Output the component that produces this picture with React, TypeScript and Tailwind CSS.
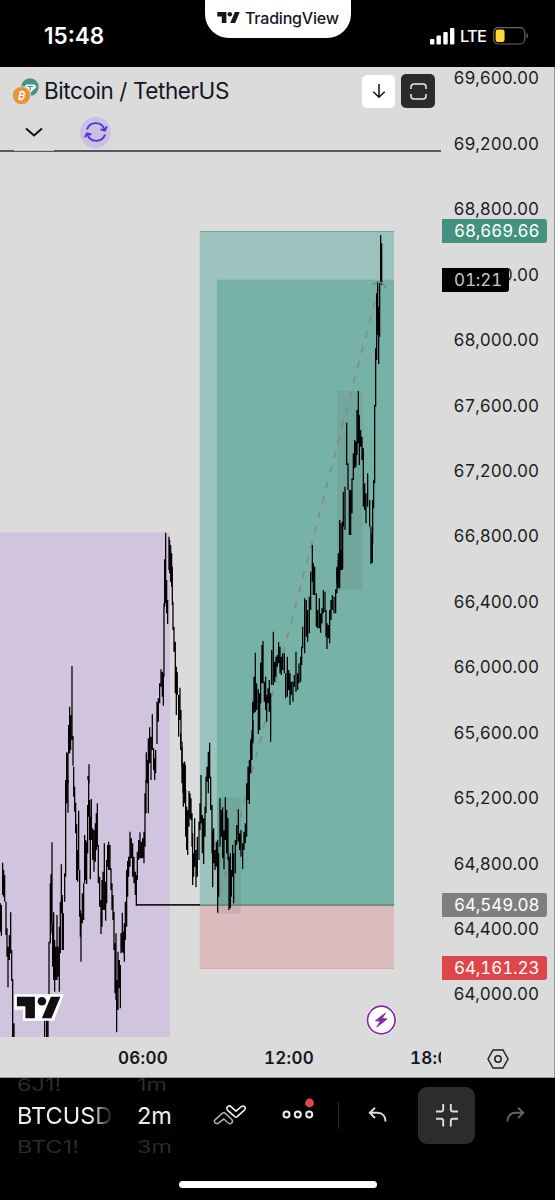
import type { ReactNode } from 'react';

type Bar = [x: number, high: number, low: number];

interface BarGroup {
  x: number;
  y: number;
  bars: Bar[];
}

const PRICES = [
  '69,600.00', '69,200.00', '68,800.00', '68,400.00', '68,000.00',
  '67,600.00', '67,200.00', '66,800.00', '66,400.00', '66,000.00',
  '65,600.00', '65,200.00', '64,800.00', '64,400.00', '64,000.00',
];

// bars are stored per block, in thirds of a pixel from the block's origin
const BAR_GROUPS: BarGroup[] = [
  {
    x: 0,
    y: 780,
    bars: [
      [1, 370, 455], [4, 375, 467], [8, 248, 345], [11, 270, 350], [14, 285, 365], [18, 365, 465],
      [21, 445, 530], [24, 500, 622], [28, 465, 540], [32, 397, 520], [35, 510, 602], [38, 597, 772],
      [42, 730, 772], [134, 720, 772], [140, 700, 772], [144, 690, 772], [147, 485, 700], [151, 310, 490],
      [153, 283, 430], [156, 187, 460], [158, 430, 560], [161, 397, 600], [164, 480, 635], [167, 500, 600],
      [171, 405, 600], [174, 500, 590], [178, 440, 635], [181, 365, 520], [184, 253, 400], [187, 345, 510],
      [190, 400, 510], [194, 280, 365], [197, 0, 290], [200, 0, 70], [204, 0, 98], [221, -40, 50],
      [224, 20, 95], [227, 68, 160], [230, 133, 300], [233, 210, 305], [236, 92, 270], [239, 270, 410],
      [241, 390, 470], [243, 400, 545], [247, 340, 430], [251, 310, 420], [254, 165, 310], [257, 180, 300],
      [260, 185, 312], [263, 75, 220], [266, 0, 110], [269, 60, 180], [271, 110, 298], [274, 57, 180],
      [278, 145, 240], [282, 150, 275], [286, 130, 245], [289, 100, 210], [292, 70, 200], [295, 195, 310],
      [299, 290, 380], [303, 360, 462], [306, 300, 440], [309, 275, 390], [313, 190, 390], [317, 305, 422],
      [320, 240, 370], [323, 195, 260], [326, 185, 270], [330, 195, 270], [333, 265, 330], [336, 310, 390],
      [339, 345, 420], [342, 395, 510], [345, 490, 640], [348, 460, 660], [350, 600, 757], [354, 515, 690],
      [358, 540, 625], [361, 555, 685], [363, 460, 520], [367, 398, 515], [370, 455, 520], [373, 430, 545],
      [376, 365, 480], [380, 270, 440], [383, 243, 350], [386, 230, 290], [390, 155, 260], [394, 175, 235],
      [398, 190, 290], [402, 230, 310], [406, 275, 345], [409, 285, 377], [412, 215, 300], [416, 180, 240],
      [420, 157, 235], [424, 185, 235], [428, 175, 235], [432, 155, 250], [435, 40, 200], [438, 0, 100],
      [445, 0, 100],
    ],
  },
  {
    x: 0,
    y: 520,
    bars: [
      [200, 697, 790], [204, 700, 790], [206, 615, 700], [209, 560, 700], [212, 585, 690], [216, 438, 660],
      [219, 648, 737], [264, 768, 780], [267, 733, 790], [439, 697, 790], [443, 720, 790], [445, 655, 780],
      [449, 622, 730], [453, 650, 780], [457, 583, 690], [461, 685, 750], [464, 715, 780], [467, 690, 760],
      [471, 545, 672], [475, 535, 605], [479, 490, 550], [483, 448, 500], [487, 455, 530], [490, 460, 557],
      [492, 250, 470], [494, 118, 260], [497, 38, 250], [500, 180, 280], [503, 240, 312], [507, 50, 150],
      [509, 60, 160], [512, 75, 185], [515, 100, 200], [517, 140, 255], [519, 245, 330], [522, 320, 395],
      [526, 365, 520], [529, 440, 585], [532, 457, 525], [536, 525, 650], [540, 503, 600], [543, 570, 670],
      [546, 665, 740], [549, 730, 820], [553, 725, 850], [556, 735, 840],
    ],
  },
  {
    x: 150,
    y: 730,
    bars: [
      [92, 10, 60], [96, 50, 160], [100, 110, 230], [104, 95, 190], [107, 180, 320], [110, 230, 360],
      [113, 240, 375], [117, 183, 290], [120, 190, 265], [123, 205, 270], [126, 250, 350], [128, 310, 465],
      [131, 370, 440], [134, 265, 410], [138, 360, 472], [142, 320, 440], [147, 275, 390], [150, 220, 300],
      [153, 135, 280], [157, 255, 370], [161, 265, 402], [165, 230, 320], [168, 140, 250], [171, 110, 155],
      [175, 65, 190], [179, 38, 145], [182, 140, 240], [186, 225, 370], [188, 300, 472], [191, 295, 400],
      [195, 360, 420], [199, 335, 410], [203, 330, 548], [206, 370, 500], [210, 205, 350], [214, 240, 320],
      [218, 232, 385], [222, 300, 418], [226, 202, 330], [230, 240, 370], [234, 265, 390], [237, 380, 540],
      [241, 370, 535], [244, 420, 500], [248, 345, 440], [251, 370, 520], [256, 330, 430], [260, 285, 345],
      [265, 238, 335], [269, 310, 360], [273, 300, 380], [278, 340, 417], [282, 305, 360], [286, 280, 340],
      [290, 160, 320], [294, 110, 210], [298, 90, 222], [302, 30, 130], [306, 0, 90], [309, -30, 40],
    ],
  },
  {
    x: 230,
    y: 530,
    bars: [
      [64, 625, 680], [68, 515, 630], [72, 440, 550], [76, 368, 545], [80, 460, 540], [85, 478, 612],
      [89, 490, 600], [92, 398, 520], [96, 345, 460], [99, 333, 460], [103, 455, 515], [107, 440, 540],
      [110, 495, 575], [114, 475, 520], [118, 450, 545], [122, 490, 635], [125, 360, 465], [130, 305, 465],
      [134, 395, 455], [138, 380, 440], [142, 375, 410], [146, 337, 400], [150, 350, 430], [154, 380, 435],
      [158, 370, 420], [163, 370, 430], [167, 430, 505], [172, 380, 500], [176, 420, 480], [180, 430, 525],
      [184, 455, 495], [189, 455, 515], [193, 435, 470], [198, 365, 485], [203, 430, 480], [207, 400, 460],
      [212, 380, 455], [215, 350, 405], [218, 290, 355], [224, 205, 370], [229, 210, 320], [233, 240, 335],
      [238, 200, 310], [242, 125, 240], [247, 45, 155], [250, 100, 195], [254, 110, 195], [259, 190, 290],
      [263, 240, 295], [268, 205, 295], [272, 250, 308], [276, 235, 280], [280, 180, 250], [285, 185, 245],
      [288, 240, 320], [291, 280, 357], [295, 285, 325], [299, 240, 340], [303, 210, 270], [307, 195, 240],
      [312, 200, 250], [317, 178, 250], [321, 115, 190], [325, 90, 175], [329, 65, 175], [333, -20, 120],
      [338, -20, 115],
    ],
  },
  {
    x: 320,
    y: 220,
    bars: [
      [51, 1040, 1090], [55, 1000, 1080], [59, 900, 1060], [63, 990, 1050], [67, 905, 1050], [70, 815, 920],
      [75, 800, 930], [80, 608, 735], [84, 730, 810], [88, 810, 945], [92, 810, 945], [96, 775, 880],
      [100, 700, 780], [104, 660, 745], [108, 665, 740], [111, 570, 705], [115, 513, 670], [118, 585, 735],
      [122, 630, 680], [126, 650, 720], [130, 685, 860], [134, 790, 870], [138, 820, 910], [143, 760, 860],
      [149, 840, 920], [153, 920, 1032], [157, 940, 1028], [158, 840, 970], [161, 780, 865], [164, 555, 790],
      [167, 385, 560], [170, 220, 420], [173, 185, 345], [176, 260, 432], [179, 190, 350], [182, 45, 190],
      [185, 70, 195],
    ],
  },
];

const PriceBars = ({ bars, x, y }: BarGroup) => (
  <path
    transform={`translate(${x} ${y}) scale(0.3333)`}
    d={bars.map(([bx, high, low]) => `M${bx} ${high}V${low}`).join('')}
    stroke="#000"
    strokeWidth="3.8"
    fill="none"
  />
);

const TvMark = ({ className }: { className: string }) => (
  <svg viewBox="0 0 43 21" className={className} fill="currentColor">
    <path d="M0 0h17.500v21H8.700V8.600H0z" />
    <circle cx="24" cy="4.300" r="4.300" />
    <path d="M33.600 0H43l-8.800 21h-9.400z" />
  </svg>
);

const StatusBar = () => (
  <header className="relative flex h-[67px] items-start justify-between bg-black text-white">
    <span className="ml-11 mt-[20px] w-[62px] text-[22.5px] leading-8 font-semibold">15:48</span>
    <div className="absolute left-[205px] top-0 flex h-[38px] w-[146px] items-center rounded-b-[24px] bg-white pl-[12px] pb-[3px] text-[#131722]">
      <TvMark className="h-[11px] w-[23px]" />
      <span className="ml-[5px] whitespace-nowrap text-[16px] font-medium tracking-[-0.2px]">TradingView</span>
    </div>
    <div className="mr-[26px] mt-[20px] flex h-8 items-center">
      <svg viewBox="0 0 25 17" className="h-[17px] w-[25px]" fill="#fff">
        <rect x="0" y="11" width="4.400" height="5.500" rx="1" />
        <rect x="6.500" y="7.500" width="4.400" height="9" rx="1" />
        <rect x="13.300" y="4" width="4.400" height="12.500" rx="1" />
        <rect x="20" y="0" width="4.400" height="16.500" rx="1" />
      </svg>
      <span className="ml-[5px] w-[27px] text-[16.5px] font-medium tracking-[-0.8px]">LTE</span>
      <svg viewBox="0 0 36 18" className="ml-[6px] h-[18px] w-[36px]">
        <rect x="0.700" y="0.700" width="31" height="16.300" rx="4.500" fill="none" stroke="#666" strokeWidth="1.200" />
        <path d="M33.500 6v5.500c2-.8 2-4.700 0-5.500" fill="#666" />
        <rect x="2.600" y="2.600" width="9" height="12.500" rx="2.300" fill="#fdd835" />
      </svg>
    </div>
  </header>
);

const Legend = () => (
  <div className="absolute inset-x-0 top-0 flex flex-col">
    <div className="flex h-[48px] items-center">
      <svg viewBox="0 0 28 28" className="ml-[12px] h-7 w-7">
        <circle cx="18" cy="10" r="8.700" fill="#479388" />
        <path d="M14 7.500h8.500l2 2.500-6 5.500-6-5.500z" fill="#fff" />
        <path d="M15.500 9.500h5.500M18.200 9.500v4" stroke="#479388" strokeWidth="1.200" />
        <circle cx="9.500" cy="18.500" r="9.500" fill="#dbdbdb" />
        <circle cx="9.500" cy="18.500" r="8.700" fill="#e99437" />
        <path
          d="M8.300 15l-1.400 7M7.200 15.200h3.600c2.600 0 2.100 3.100-.4 3.200H8m2.400 0c2.700.1 1.900 3.500-.8 3.500H6M9.600 13.700l-.3 1.500M8.200 22l-.3 1.300M11.500 13.900l-.3 1.300M10 22l-.3 1.300"
          fill="none"
          stroke="#fff"
          strokeWidth="1.400"
        />
      </svg>
      <h1 className="ml-[4px] whitespace-nowrap text-[22.5px] leading-8 tracking-[-0.420px] text-[#131722]">Bitcoin / TetherUS</h1>
      <button className="ml-auto mr-[6px] flex h-[33px] w-[33px] items-center justify-center rounded-[5px] bg-white">
        <svg viewBox="0 0 16 16" className="h-4 w-4" fill="none" stroke="#131313" strokeWidth="1.500">
          <path d="M8 1v13M2.300 8.700L8 14.300l5.700-5.600" />
        </svg>
      </button>
      <button className="mr-[6px] flex h-[34px] w-[34px] items-center justify-center rounded-[5px] bg-[#2b2b2b]">
        <svg viewBox="0 0 17 17" className="h-[17px] w-[17px]" fill="none" stroke="#eee" strokeWidth="1.500">
          <path d="M1 6V4a3 3 0 0 1 3-3h9a3 3 0 0 1 3 3v2M1 11v2a3 3 0 0 0 3 3h9a3 3 0 0 0 3-3v-2" />
        </svg>
      </button>
    </div>
    <div className="flex h-[34px] items-center">
      <svg viewBox="0 0 18 10" className="ml-[25px] h-[10px] w-[18px]" fill="none" stroke="#111" strokeWidth="2">
        <path d="M1 1.500l8 7 8-7" />
      </svg>
      <span className="ml-[37px] flex h-[31px] w-[31px] items-center justify-center rounded-full bg-[#c9c0e2]">
        <svg viewBox="0 0 24 20" className="h-[20px] w-[24px]" fill="none" stroke="#4f2fe0" strokeWidth="1.900">
          <path d="M3 7.500a9.200 9.200 0 0 1 17.500 0M21 12.500a9.200 9.200 0 0 1-17.500 0" />
          <path d="M16.500 7.300l4.500 1.200 1.700-4.200M7.300 12.500l-4.300-1.200-2 4" />
        </svg>
      </span>
    </div>
  </div>
);

const Chart = () => (
  <section className="relative h-[970px] w-[441px] shrink-0 overflow-hidden">
    <svg viewBox="0 67 441 970" className="block h-[970px] w-[441px]">
      <rect x="0" y="532.500" width="170" height="505" fill="#d1c4de" />
      <rect x="199.700" y="231" width="194.300" height="674" fill="#9bc2bc" />
      <rect x="217" y="279.700" width="177" height="625.500" fill="#76b2a7" />
      <rect x="199.700" y="905" width="194.300" height="64" fill="#dabcbe" />
      <path d="M200 231.500h194" stroke="#6aa79c" />
      <path d="M200 968.500h194" stroke="#dfa6a9" />
      <rect x="217" y="797" width="24" height="117" fill="#606060" fillOpacity="0.130" />
      <rect x="337" y="391" width="25.500" height="199" fill="#606060" fillOpacity="0.130" />
      <path d="M0 151h441" stroke="#2e2e2e" strokeWidth="1.700" />
      <path d="M14 150.200h40" stroke="#f2f2f2" strokeWidth="1" />
      <path d="M200 905.200h194" stroke="#58776f" strokeWidth="1.200" />
      <path d="M136 904.800h64" stroke="#1c1a20" strokeWidth="1.700" />
      <path d="M220.500 893L380 282" stroke="#898a8b" strokeWidth="1.800" strokeDasharray="7 8.500" />
      {BAR_GROUPS.map((group) => (
        <PriceBars key={`${group.x}-${group.y}`} {...group} />
      ))}
      <path d="M372.500 284.500l5-2.300h3.500l5.500 5.700" stroke="#6d8580" strokeWidth="1.300" fill="none" />
      <g transform="translate(16.900 996.700)">
        <path d="M-2.500-2.500H47L37 24H6V13h-8.500z" fill="#fff" />
        <g fill="#111">
          <path d="M0 0h18v21.500H8.500V9.500H0z" />
          <circle cx="25" cy="4.500" r="4.300" />
          <path d="M34 0h9.500l-9 21.500H25z" />
        </g>
      </g>
      <g transform="translate(381.300 1020)">
        <circle r="15.300" fill="#fff" />
        <circle r="13.800" fill="#fff" stroke="#8527a0" strokeWidth="1.700" />
        <path d="M4-7L-5.800.8l5 .3L-4.500 7 5.800-1 .8-1.400z" fill="#8527a0" stroke="#8527a0" strokeWidth=".9" strokeLinejoin="round" />
      </g>
    </svg>
    <Legend />
  </section>
);

const PriceTag = ({ className, children }: { className: string; children: ReactNode }) => (
  <div className={`absolute left-[1px] flex h-6 items-center rounded-r-[3px] pl-[12px] pt-px ${className}`}>{children}</div>
);

const PriceAxis = () => (
  <aside className="relative h-[970px] w-[113px] overflow-hidden text-[17px] tracking-[-0.1px] tabular-nums text-[#1b1d24]">
    <div className="-mt-[20.500px] flex flex-col pl-[12.500px]">
      {PRICES.map((price) => (
        <span key={price} className="flex h-[65.430px] items-center">{price}</span>
      ))}
    </div>
    <PriceTag className="top-[152px] w-[105px] bg-[#43927f] text-white">68,669.66</PriceTag>
    <PriceTag className="top-[201px] w-[67px] bg-black text-[#c8c8c8]">01:21</PriceTag>
    <PriceTag className="top-[826px] w-[105px] bg-[#7f7f7f] text-white">64,549.08</PriceTag>
    <PriceTag className="top-[889px] w-[105px] bg-[#df464b] text-white">64,161.23</PriceTag>
  </aside>
);

const TimeAxis = () => (
  <div className="flex h-[41px] items-center border-b border-[#999] pt-[3px] text-[17px] font-semibold tracking-[0.3px] text-[#131722] tabular-nums">
    <div className="flex w-[441px] overflow-hidden whitespace-nowrap pl-[118px] pt-px">
      <span className="w-[146px] shrink-0">06:00</span>
      <span className="w-[146px] shrink-0">12:00</span>
      <span className="shrink-0">18:00</span>
    </div>
    <svg viewBox="0 0 22 20" className="ml-[46px] h-[20px] w-[22px]" fill="none" stroke="#222" strokeWidth="1.500">
      <path d="M6 1h10l5 9-5 9H6l-5-9z" />
      <circle cx="11" cy="10" r="3.200" />
    </svg>
  </div>
);

interface WheelProps {
  items: [string, string, string];
  className: string;
  valueClassName?: string;
}

const Wheel = ({ items, className, valueClassName = '' }: WheelProps) => (
  <div className={`flex h-[86px] flex-col overflow-hidden whitespace-nowrap ${className}`}>
    <span className="-mt-[8px] h-[30px] origin-left scale-y-[0.72] text-[23.5px] leading-[30px] text-[#2b2b2b]">{items[0]}</span>
    <span className={`-mt-px h-[33px] text-[23.5px] leading-[33px] text-[#eee] ${valueClassName}`}>{items[1]}</span>
    <span className="h-[30px] origin-left scale-y-[0.72] text-[23.5px] leading-[30px] text-[#2b2b2b]">{items[2]}</span>
  </div>
);

const Toolbar = () => (
  <footer className="flex h-[122px] flex-col bg-black">
    <div className="flex h-[86px]">
      <Wheel
        items={['6J1!', 'BTCUSD', 'BTC1!']}
        className="ml-[17px] w-[95px]"
        valueClassName="[mask-image:linear-gradient(to_right,#000_78%,transparent_102%)]"
      />
      <Wheel items={['1m', '2m', '3m']} className="ml-[25px] w-[45px]" />
      <div className="flex h-[74px] flex-1 items-center">
        <svg viewBox="0 0 34 20" className="ml-[31px] h-[20px] w-[34px]" fill="none" strokeLinejoin="round">
          <path
            d="M2 14.800L9.500 8.200c.9-.7 1.800-.6 2.500 0l6.800 6.300c2 2.500-1 5.500-3.500 3.500l-4.500-4-5.500 4.200c-2.800 1.300-5-1.500-3.300-3.400z"
            stroke="#a8a8a8"
            strokeWidth="1.600"
          />
          <path
            d="M14.500 1.800c1.300-1.200 2.700-.9 3.700 0L23 6.200l5.300-4.600c2.800-1.800 5 1.200 3.300 3.200l-7.400 6.900c-.8.700-1.700.6-2.400 0l-7.100-6.400c-1.200-1.200-1.100-2.600-.2-3.500z"
            stroke="#eee"
            strokeWidth="1.600"
          />
        </svg>
        <svg viewBox="0 0 34 24" className="ml-[35px] mb-[10px] h-[24px] w-[34px]" fill="none">
          <circle cx="4.500" cy="16.500" r="3" stroke="#eee" strokeWidth="2" />
          <circle cx="15.800" cy="16.500" r="3" stroke="#eee" strokeWidth="2" />
          <circle cx="27.200" cy="16.500" r="3" stroke="#eee" strokeWidth="2" />
          <circle cx="27.500" cy="5" r="4.400" fill="#e0474c" />
        </svg>
        <span className="ml-[22px] h-[27px] w-px bg-[#2a2a2a]" />
        <svg viewBox="0 0 20 16" className="ml-[29px] h-[16px] w-[20px]" fill="none" stroke="#ddd" strokeWidth="1.900">
          <path d="M7 .8L1.800 5.800 7 11M2 5.800h7.500c5.300 0 8 3.700 8 8.700" />
        </svg>
        <button className="ml-[30px] flex h-[57px] w-[57px] items-center justify-center rounded-[9px] bg-[#2c2c2c]">
          <svg viewBox="0 0 24 24" className="h-6 w-6" fill="none" stroke="#ddd" strokeWidth="1.900">
            <path d="M1 8.500h5a2.200 2.200 0 0 0 2.200-2.200V1M23 8.500h-5a2.200 2.200 0 0 1-2.200-2.200V1M1 15.800h5a2.200 2.200 0 0 1 2.200 2.200v5.500M23 15.800h-5a2.200 2.200 0 0 0-2.200 2.200v5.500" />
          </svg>
        </button>
        <svg viewBox="0 0 20 16" className="ml-[30px] h-[16px] w-[20px]" fill="none" stroke="#666" strokeWidth="1.900">
          <path d="M13 .8l5.200 5L13 11M18 5.800h-7.500c-5.300 0-8 3.700-8 8.700" />
        </svg>
      </div>
    </div>
    <span className="ml-[179px] mt-[17px] h-[7px] w-[198px] rounded-full bg-white" />
  </footer>
);

export default function App() {
  return (
    <main className="flex h-[1200px] w-[555px] flex-col overflow-hidden bg-[#dbdbdb] font-['Inter','Liberation_Sans',sans-serif]">
      <StatusBar />
      <div className="border-r border-[#999]">
        <div className="flex">
          <Chart />
          <PriceAxis />
        </div>
        <TimeAxis />
      </div>
      <Toolbar />
    </main>
  );
}
